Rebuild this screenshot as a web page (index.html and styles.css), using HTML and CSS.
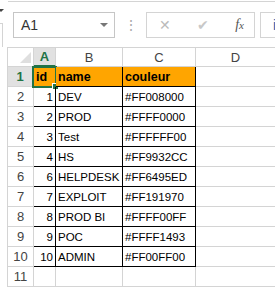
FILE: index.html
```html
<!DOCTYPE html>
<html lang="en">
<head>
    <meta charset="UTF-8">
    <title>Feuil1</title>
    <link rel="stylesheet" href="styles.css">
</head>
<body>
<div class="app">
    <div class="ribbon-edge">
        <span class="caret"></span>
        <span class="ribbon-line"></span>
    </div>

    <div class="formula-bar">
        <div class="side-edge"></div>
        <div class="name-box">
            <span>A1</span>
            <span class="name-arrow"></span>
        </div>
        <div class="grip">&#8942;</div>
        <div class="fx-buttons">
            <span class="fx-btn cancel">&#10005;</span>
            <span class="fx-btn enter">&#10004;</span>
            <span class="fx-btn fx"><i>f</i><i class="x">x</i></span>
        </div>
        <div class="formula-input">id</div>
    </div>

    <div class="sheet">
        <div class="hd corner"><span class="corner-tri"></span></div>
        <div class="hd col sel">A</div>
        <div class="hd col">B</div>
        <div class="hd col">C</div>
        <div class="hd col">D</div>

        <div class="hd row sel">1</div>
        <div class="c b head">id<span class="cursor"><span class="handle"></span></span></div>
        <div class="c b head">name</div>
        <div class="c b head">couleur</div>
        <div class="c"></div>

        <div class="hd row">2</div>
        <div class="c b num">1</div><div class="c b">DEV</div><div class="c b">#FF008000</div><div class="c"></div>
        <div class="hd row">3</div>
        <div class="c b num">2</div><div class="c b">PROD</div><div class="c b">#FFFF0000</div><div class="c"></div>
        <div class="hd row">4</div>
        <div class="c b num">3</div><div class="c b">Test</div><div class="c b">#FFFFFF00</div><div class="c"></div>
        <div class="hd row">5</div>
        <div class="c b num">4</div><div class="c b">HS</div><div class="c b">#FF9932CC</div><div class="c"></div>
        <div class="hd row">6</div>
        <div class="c b num">6</div><div class="c b">HELPDESK</div><div class="c b">#FF6495ED</div><div class="c"></div>
        <div class="hd row">7</div>
        <div class="c b num">7</div><div class="c b">EXPLOIT</div><div class="c b">#FF191970</div><div class="c"></div>
        <div class="hd row">8</div>
        <div class="c b num">8</div><div class="c b">PROD BI</div><div class="c b">#FFFF00FF</div><div class="c"></div>
        <div class="hd row">9</div>
        <div class="c b num">9</div><div class="c b">POC</div><div class="c b">#FFFF1493</div><div class="c"></div>
        <div class="hd row">10</div>
        <div class="c b num">10</div><div class="c b">ADMIN</div><div class="c b">#FF00FF00</div><div class="c"></div>

        <div class="hd row">11</div>
        <div class="c"></div><div class="c"></div><div class="c"></div><div class="c"></div>
    </div>
</div>
</body>
</html>
```

FILE: styles.css
```css
html, body {
    margin: 0;
    padding: 0;
    background: #fff;
    overflow: hidden;
}

body {
    font-family: "Liberation Sans", Arial, sans-serif;
    color: #000;
}

.app {
    width: 275px;
    height: 288px;
    overflow: hidden;
}

/* bottom edge of the ribbon */
.ribbon-edge {
    display: flex;
    height: 12px;
}

.caret {
    width: 0;
    height: 0;
    margin: 9px 4px 0 -2px;
    border-left: 3px solid transparent;
    border-right: 3px solid transparent;
    border-top: 3px solid #444;
}

.ribbon-line {
    flex: 1;
    margin-top: 1px;
    height: 0;
    border-top: 1px solid #d4d4d4;
}

/* name box + formula bar */
.formula-bar {
    display: flex;
    align-items: flex-start;
    height: 35px;
}

.side-edge {
    align-self: stretch;
    width: 2px;
    margin-top: 11px;
    border-top: 1px solid #d4d4d4;
    border-right: 1px solid #d4d4d4;
}

.name-box {
    box-sizing: border-box;
    width: 102px;
    height: 26px;
    margin-left: 10px;
    border: 1px solid #c6c6c6;
    display: flex;
    align-items: center;
    justify-content: space-between;
    padding: 0 6px 0 7px;
    font-size: 14px;
    color: #333;
}

.name-arrow {
    width: 0;
    height: 0;
    border-left: 4px solid transparent;
    border-right: 4px solid transparent;
    border-top: 4px solid #777;
}

.grip {
    width: 31px;
    height: 26px;
    line-height: 26px;
    text-align: center;
    color: #aaa;
    font-size: 14px;
}

.fx-buttons {
    box-sizing: border-box;
    width: 109px;
    height: 26px;
    border: 1px solid #d4d4d4;
    display: flex;
    align-items: center;
    justify-content: space-between;
    padding: 0 10px 0 12px;
}

.fx-btn {
    font-size: 14px;
    color: #bbb;
}

.fx-btn.enter {
    color: #c8c8c8;
}

.fx {
    font-family: "Liberation Serif", serif;
    font-size: 14px;
    color: #555;
}

.fx .x {
    font-size: 11px;
}

.formula-input {
    box-sizing: border-box;
    margin-left: 5px;
    flex: 1;
    height: 26px;
    border: 1px solid #d4d4d4;
    border-right: none;
    padding-left: 12px;
    font-size: 14px;
    line-height: 24px;
    color: #2a5fa8;
    white-space: nowrap;
    overflow: hidden;
}

/* worksheet grid */
.sheet {
    margin-left: 7px;
    display: grid;
    grid-template-columns: 26px 22px 67px 73px 80px;
    grid-auto-rows: 20px;
    border-left: 1px solid #d4d4d4;
    font-size: 11.5px;
}

.hd, .c {
    box-sizing: border-box;
    border-right: 1px solid #d4d4d4;
    border-bottom: 1px solid #d4d4d4;
}

.hd {
    display: flex;
    align-items: center;
    justify-content: center;
    color: #444;
    font-size: 13px;
    background: #fff;
}

.hd.col {
    border-top: 1px solid #d4d4d4;
}

.hd.corner {
    border-top: 1px solid #d4d4d4;
    justify-content: flex-end;
    align-items: flex-end;
    padding: 0 2px 3px 0;
}

.corner-tri {
    width: 0;
    height: 0;
    border-left: 11px solid transparent;
    border-bottom: 11px solid #dfdfdf;
}

.hd.sel {
    background: #e1e1e1;
    color: #217346;
    font-weight: bold;
}

.hd.col.sel {
    border-bottom: 2px solid #217346;
}

.hd.row.sel {
    border-right: 2px solid #217346;
}

.c {
    display: flex;
    align-items: center;
    padding: 1px 2px 0;
    white-space: nowrap;
    position: relative;
}

.c.b {
    border-right-color: #000;
    border-bottom-color: #000;
}

.c.head {
    background: #ffa500;
    font-weight: bold;
    font-size: 12.5px;
}

.c.num {
    justify-content: flex-end;
}

.cursor {
    position: absolute;
    left: -2px;
    top: -1px;
    right: -2px;
    bottom: -2px;
    border: 2px solid #217346;
}

.handle {
    position: absolute;
    right: -4px;
    bottom: -4px;
    width: 5px;
    height: 5px;
    background: #217346;
    border: 1px solid #fff;
}
```
